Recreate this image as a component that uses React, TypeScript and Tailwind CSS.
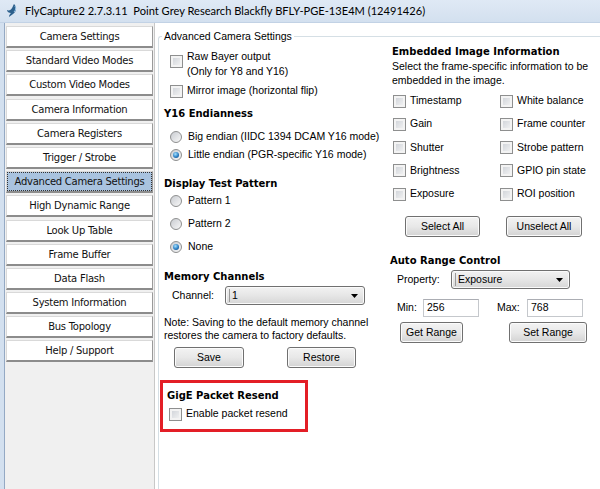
import React from "react";

const ui = "font-['Liberation_Sans',Arial,sans-serif] text-[10.5px]";
const bold = "font-['DejaVu_Sans',Verdana,sans-serif] font-bold text-[10px]";

const pages = [
  "Camera Settings",
  "Standard Video Modes",
  "Custom Video Modes",
  "Camera Information",
  "Camera Registers",
  "Trigger / Strobe",
  "Advanced Camera Settings",
  "High Dynamic Range",
  "Look Up Table",
  "Frame Buffer",
  "Data Flash",
  "System Information",
  "Bus Topology",
  "Help / Support",
];

function Check() {
  return (
    <span className="inline-block w-[13px] h-[13px] shrink-0 border border-[#8e8f8f] bg-linear-to-br from-[#cbcfd5] to-[#f7f7f7] shadow-[inset_0_0_0_2px_#f3f3f3]" />
  );
}

function Radio({ on = false }: { on?: boolean }) {
  return (
    <span className="inline-flex items-center justify-center w-[12px] h-[12px] shrink-0 rounded-full border border-[#8e8f8f] bg-linear-to-br from-[#c9ccd1] to-[#f8f8f8]">
      {on && (
        <span className="w-[6px] h-[6px] rounded-full bg-[radial-gradient(circle_at_40%_35%,#a6e2ff,#2b7fc4_55%,#103f73)]" />
      )}
    </span>
  );
}

function Btn({ w, children }: { w: string; children: React.ReactNode }) {
  return (
    <button
      className={`${w} h-[21px] rounded-[3px] border border-[#707070] bg-linear-to-b from-[#f3f3f3] via-[#e8e8e8] to-[#d3d3d3] shadow-[inset_0_0_0_1px_#fbfbfb] ${ui}`}
    >
      {children}
    </button>
  );
}

function Combo({ w, value }: { w: string; value: string }) {
  return (
    <div
      className={`${w} h-[19px] flex items-center justify-between rounded-[3px] border border-[#707070] bg-linear-to-b from-[#f2f2f2] via-[#e6e6e6] to-[#d6d6d6] shadow-[inset_0_0_0_1px_#fafafa] pl-[3px] pr-[6px]`}
    >
      <span className={`${ui} border-l border-[#9a9a9a] pl-[2px] leading-[13px]`}>{value}</span>
      <svg width="7" height="4" viewBox="0 0 7 4">
        <path d="M0 0h7L3.5 4z" fill="#000" />
      </svg>
    </div>
  );
}

function Field({ w, value }: { w: string; value: string }) {
  return (
    <div className={`${w} h-[18px] flex items-center border border-[#c5c8cc] border-t-[#abadb3] bg-white pl-[3px] ${ui}`}>
      {value}
    </div>
  );
}

function CheckRow({ label, cls = "" }: { label: string; cls?: string }) {
  return (
    <div className={`flex items-center gap-[4px] h-[16px] ${cls}`}>
      <Check />
      <span className={ui}>{label}</span>
    </div>
  );
}

function RadioRow({ label, on, cls = "" }: { label: string; on?: boolean; cls?: string }) {
  return (
    <div className={`flex items-center gap-[6px] h-[16px] ${cls}`}>
      <Radio on={on} />
      <span className={ui}>{label}</span>
    </div>
  );
}

function TitleBar() {
  return (
    <div className="h-[23px] shrink-0 flex items-center gap-[7px] pl-[6px] bg-linear-to-b from-[#dfe9f5] to-[#d3e0ef] border-b border-[#c2d2e5]">
      <svg width="12" height="16" viewBox="0 0 12 16">
        <path d="M8 1c2 2 3 5 1 8-1 2-4 3-6 5 0-2 1-3 2-4-2 0-4-1-4-3 2 1 4 0 5-2 1-1 1-3 2-4z" fill="#2b5f8c" />
        <path d="M9 3c1 2 1 4-1 6" stroke="#9cc6e8" strokeWidth="1" fill="none" />
      </svg>
      <span className="font-['Lato',sans-serif] text-[11.1px] text-black whitespace-nowrap">
        FlyCapture2 2.7.3.11&nbsp;&nbsp;Point Grey Research Blackfly BFLY-PGE-13E4M (12491426)
      </span>
    </div>
  );
}

function Sidebar() {
  return (
    <div className="w-[149px] shrink-0 bg-[#f0f0f0] px-[1px] pt-[3px] flex flex-col gap-[2.2px]">
      {pages.map((p) => {
        const active = p === "Advanced Camera Settings";
        return (
          <div
            key={p}
            className={`h-[22px] flex items-center justify-center border border-[#d9d9d9] border-r-[#9a9a9a] border-b-2 border-b-[#8c8c8c] font-['DejaVu_Sans',Verdana,sans-serif] text-[10px] tracking-[-0.25px] text-[#111] ${
              active ? "bg-[#a9c3df]" : "bg-white"
            }`}
          >
            {active ? (
              <span className="w-full h-full flex items-center justify-center border border-dotted border-[#333]">{p}</span>
            ) : (
              p
            )}
          </div>
        );
      })}
    </div>
  );
}

export default function App() {
  return (
    <div className="w-[600px] h-[489px] overflow-hidden flex flex-col bg-white text-black">
      <TitleBar />
      <div className="flex flex-1 min-h-0">
        <div className="w-[5px] shrink-0 bg-[#d3e0ef] border-r border-[#94a9c4]" />
        <Sidebar />
        <div className="flex-1 border-l border-[#c8c8c8] pl-[3px] pt-[6px]">
          <fieldset className="h-full border-t border-l border-[#d5dfe5] rounded-tl-[3px]">
            <legend className={`ml-[3px] px-[2px] leading-[14px] ${ui}`}>Advanced Camera Settings</legend>
            <div className="flex">
              {/* left column */}
              <div className="w-[229px] flex flex-col">
                <div className="flex gap-[4px] pl-[11px] mt-[6px]">
                  <span className="mt-[1px]"><Check /></span>
                  <span className={`${ui} leading-[15px]`}>
                    Raw Bayer output
                    <br />
                    (Only for Y8 and Y16)
                  </span>
                </div>
                <CheckRow label="Mirror image (horizontal flip)" cls="pl-[11px] mt-[4px]" />

                <div className={`${bold} h-[16px] leading-[16px] pl-[5px] mt-[7px]`}>Y16 Endianness</div>
                <RadioRow label="Big endian (IIDC 1394 DCAM Y16 mode)" cls="pl-[11px] mt-[7px]" />
                <RadioRow label="Little endian (PGR-specific Y16 mode)" on cls="pl-[11px] mt-[2px]" />

                <div className={`${bold} h-[16px] leading-[16px] pl-[5px] mt-[13px]`}>Display Test Pattern</div>
                <RadioRow label="Pattern 1" cls="pl-[11px] mt-[1px]" />
                <RadioRow label="Pattern 2" cls="pl-[11px] mt-[7px]" />
                <RadioRow label="None" on cls="pl-[11px] mt-[7px]" />

                <div className={`${bold} h-[16px] leading-[16px] pl-[5px] mt-[14px]`}>Memory Channels</div>
                <div className="flex items-center pl-[13px] mt-[1px]">
                  <span className={`${ui} w-[53px]`}>Channel:</span>
                  <Combo w="w-[140px]" value="1" />
                </div>

                <div className={`${ui} leading-[13px] pl-[5px] mt-[11px]`}>
                  Note: Saving to the default memory channel
                  <br />
                  restores the camera to factory defaults.
                </div>
                <div className="flex pl-[15px] gap-[43px] mt-[5px]">
                  <Btn w="w-[70px]">Save</Btn>
                  <Btn w="w-[69px]">Restore</Btn>
                </div>

                <div className="ml-[1px] mt-[12px] w-[148px] h-[52px] border-[3px] border-[#e31e26] pl-[4px] pt-[6px]">
                  <div className={`${bold} h-[14px] leading-[14px]`}>GigE Packet Resend</div>
                  <CheckRow label="Enable packet resend" cls="pl-[2px] mt-[3px]" />
                </div>
              </div>

              {/* right column */}
              <div className="flex-1 flex flex-col">
                <div className={`${bold} h-[14px] leading-[14px] pl-[4px] mt-[2px]`}>Embedded Image Information</div>
                <div className={`${ui} leading-[14px] pl-[4px]`}>
                  Select the frame-specific information to be
                  <br />
                  embedded in the image.
                </div>
                <div className="grid grid-cols-[107px_1fr] gap-y-[7.3px] pl-[5px] mt-[6px]">
                  <CheckRow label="Timestamp" />
                  <CheckRow label="White balance" />
                  <CheckRow label="Gain" />
                  <CheckRow label="Frame counter" />
                  <CheckRow label="Shutter" />
                  <CheckRow label="Strobe pattern" />
                  <CheckRow label="Brightness" />
                  <CheckRow label="GPIO pin state" />
                  <CheckRow label="Exposure" />
                  <CheckRow label="ROI position" />
                </div>
                <div className="flex pl-[17px] gap-[26px] mt-[14px]">
                  <Btn w="w-[75px]">Select All</Btn>
                  <Btn w="w-[76px]">Unselect All</Btn>
                </div>

                <div className={`${bold} h-[14px] leading-[14px] pl-[2px] mt-[17px]`}>Auto Range Control</div>
                <div className="flex items-center pl-[9px] mt-[2px]">
                  <span className={`${ui} w-[54px]`}>Property:</span>
                  <Combo w="w-[119px]" value="Exposure" />
                </div>
                <div className="flex items-center pl-[9px] mt-[10px]">
                  <span className={`${ui} w-[26px]`}>Min:</span>
                  <Field w="w-[56px]" value="256" />
                  <span className={`${ui} w-[30px] ml-[18px]`}>Max:</span>
                  <Field w="w-[56px]" value="768" />
                </div>
                <div className="flex pl-[12px] gap-[46px] mt-[5px]">
                  <Btn w="w-[63px]">Get Range</Btn>
                  <Btn w="w-[78px]">Set Range</Btn>
                </div>
              </div>
            </div>
          </fieldset>
        </div>
      </div>
    </div>
  );
}
